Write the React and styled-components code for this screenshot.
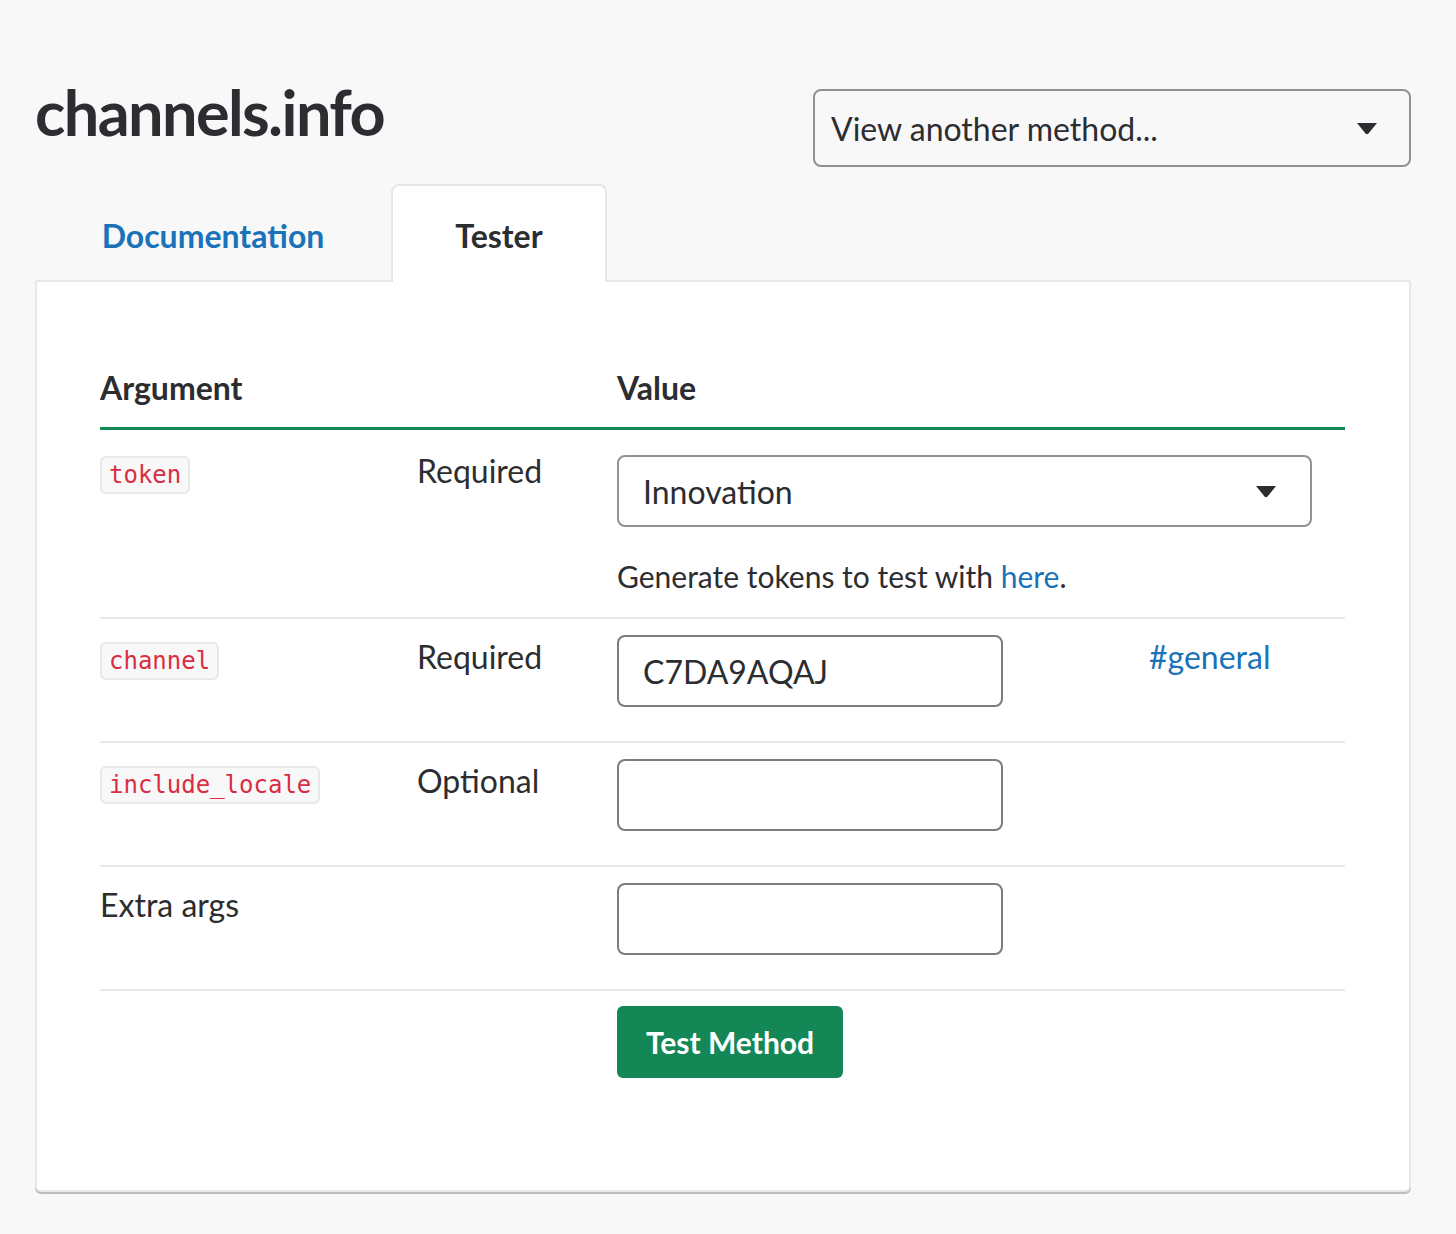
import React from "react";
import styled, { createGlobalStyle } from "styled-components";

const GlobalStyle = createGlobalStyle`
  html, body { margin: 0; padding: 0; background: #f8f8f8; }
  body { font-family: Lato, "Open Sans", sans-serif; color: #2c2d30; }
  * { box-sizing: border-box; }
`;

const Page = styled.div`
  padding: 74px 45px 40px 35px;
  width: 1456px;
`;

const Header = styled.header`
  display: flex;
  justify-content: space-between;
  align-items: flex-start;
`;

const Title = styled.h1`
  margin: 0;
  font-size: 63px;
  font-weight: 700;
  line-height: 76px;
  letter-spacing: -1.6px;
  color: #2c2d30;
`;

const SelectBox = styled.div`
  position: relative;
  display: flex;
  align-items: center;
  justify-content: space-between;
  width: ${(p) => p.$width}px;
  height: ${(p) => p.$height}px;
  flex: none;
  margin-top: ${(p) => p.$top || 0}px;
  padding: 0 ${(p) => p.$padRight}px 0 ${(p) => p.$padLeft}px;
  border: 2px solid #929292;
  border-radius: 8px;
  background: ${(p) => (p.$white ? "#fff" : "transparent")};
  font-size: 32px;
  color: #2c2d30;
`;

const Caret = () => (
  <svg width="22" height="13" viewBox="0 0 22 13">
    <path d="M1 1 H21 L12.5 11.5 Q11 13 9.5 11.5 Z" fill="#2c2d30" />
  </svg>
);

const Tabs = styled.nav`
  display: flex;
  margin-top: 17px;
  position: relative;
  z-index: 1;
  margin-bottom: -2px;
`;

const Tab = styled.div`
  display: flex;
  align-items: center;
  justify-content: center;
  width: ${(p) => p.$width}px;
  height: 98px;
  padding-top: 2px;
  font-size: 32px;
  font-weight: 700;
  color: ${(p) => (p.$active ? "#2c2d30" : "#1a73b8")};
  background: ${(p) => (p.$active ? "#fff" : "transparent")};
  border: 2px solid ${(p) => (p.$active ? "#e6e6e6" : "transparent")};
  border-bottom: none;
  border-radius: 8px 8px 0 0;
`;

const Panel = styled.section`
  width: 1376px;
  background: #fff;
  border: 2px solid #e8e8e8;
  border-radius: 2px 2px 6px 6px;
  box-shadow: 0 2px 0 #bdbdbd;
  padding: 87px 64px 112px 63px;
`;

const Row = styled.div`
  display: grid;
  grid-template-columns: 317px 200px 1fr;
  align-items: start;
  padding: ${(p) => p.$pad};
  border-top: ${(p) => (p.$first ? "none" : "2px solid #e8e8e8")};
`;

const HeaderRow = styled(Row)`
  border-bottom: 3px solid #148757;
`;

const HeadCell = styled.div`
  font-size: 32px;
  font-weight: 700;
  line-height: 38px;
`;

const Cell = styled.div`
  font-size: 32px;
  line-height: 38px;
  padding-top: ${(p) => p.$top || 0}px;
`;

const Code = styled.code`
  display: inline-block;
  font-family: "DejaVu Sans Mono", "Liberation Mono", monospace;
  font-size: 24px;
  line-height: 28px;
  color: #d92d43;
  background: #f8f8f8;
  border: 2px solid #e8e8e8;
  border-radius: 6px;
  padding: 3px 7px;
  margin-top: 2px;
`;

const ValueCell = styled.div`
  display: flex;
  flex-direction: ${(p) => (p.$column ? "column" : "row")};
  align-items: flex-start;
  gap: ${(p) => p.$gap || 0}px;
`;

const Input = styled.div`
  width: 386px;
  height: 72px;
  border: 2px solid #7c7c7c;
  border-radius: 8px;
  padding: 0 24px;
  display: flex;
  align-items: center;
  font-size: 32px;
  color: #2c2d30;
  background: #fff;
`;

const Help = styled.p`
  margin: 30px 0 0;
  font-size: 30px;
  line-height: 38px;
`;

const Link = styled.a`
  color: #1a73b8;
  text-decoration: none;
  line-height: 38px;
`;

const Button = styled.button`
  width: 226px;
  height: 72px;
  border: none;
  border-radius: 6px;
  background: #148757;
  color: #fff;
  font-family: Lato, sans-serif;
  font-size: 30px;
  font-weight: 700;
  padding: 0;
`;

export default function App() {
  return (
    <>
      <GlobalStyle />
      <Page>
        <Header>
          <Title>channels.info</Title>
          <SelectBox $width={598} $height={78} $top={15} $padLeft={16} $padRight={31}>
            <span>View another method...</span>
            <Caret />
          </SelectBox>
        </Header>
        <Tabs>
          <Tab $width={356}>Documentation</Tab>
          <Tab $width={216} $active>Tester</Tab>
        </Tabs>
        <Panel>
          <HeaderRow $first $pad="0 0 20px">
            <HeadCell>Argument</HeadCell>
            <HeadCell />
            <HeadCell>Value</HeadCell>
          </HeaderRow>
          <Row $first $pad="22px 0 22px">
            <Cell><Code>token</Code></Cell>
            <Cell>Required</Cell>
            <ValueCell $column>
              <SelectBox $white $width={695} $height={72} $top={3} $padLeft={24} $padRight={33}>
                <span>Innovation</span>
                <Caret />
              </SelectBox>
              <Help>
                Generate tokens to test with <Link href="#">here</Link>.
              </Help>
            </ValueCell>
          </Row>
          <Row $pad="16px 0 34px">
            <Cell $top={3}><Code>channel</Code></Cell>
            <Cell $top={3}>Required</Cell>
            <ValueCell $gap={146}>
              <Input>C7DA9AQAJ</Input>
              <Cell $top={3}><Link href="#">#general</Link></Cell>
            </ValueCell>
          </Row>
          <Row $pad="16px 0 34px">
            <Cell $top={3}><Code>include_locale</Code></Cell>
            <Cell $top={3}>Optional</Cell>
            <ValueCell>
              <Input />
            </ValueCell>
          </Row>
          <Row $pad="16px 0 34px">
            <Cell $top={3}>Extra args</Cell>
            <Cell />
            <ValueCell>
              <Input />
            </ValueCell>
          </Row>
          <Row $pad="15px 0 0">
            <Cell />
            <Cell />
            <ValueCell>
              <Button>Test Method</Button>
            </ValueCell>
          </Row>
        </Panel>
      </Page>
    </>
  );
}
